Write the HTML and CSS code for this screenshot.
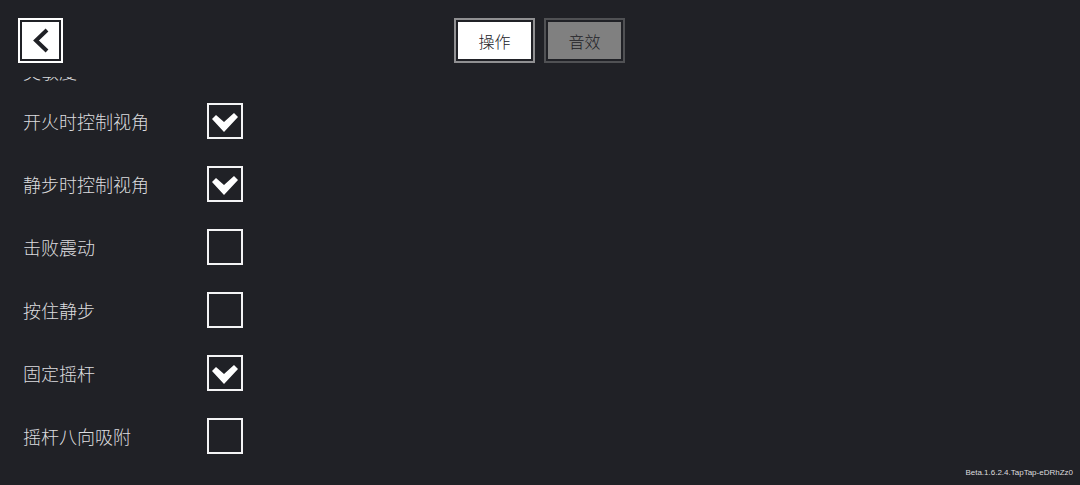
FILE: index.html
```html
<!DOCTYPE html>
<html lang="zh-CN">
<head>
<meta charset="utf-8">
<meta name="viewport" content="width=device-width, initial-scale=1">
<title>操作</title>
<link rel="stylesheet" href="styles.css">
</head>
<body>
<header class="topbar">
  <button class="frame back" type="button" aria-label="返回">
    <svg class="back-icon" viewBox="0 0 37 37" aria-hidden="true"><path d="M25 8 L14 18.500 L25 29"/></svg>
  </button>
  <nav class="tabs">
    <button class="frame tab tab-active" type="button">操作</button>
    <button class="frame tab" type="button">音效</button>
  </nav>
</header>
<main class="settings">
  <div class="row row-text"><span class="label">灵敏度</span></div>
  <div class="row"><label class="label" for="fire">开火时控制视角</label><input class="check" id="fire" type="checkbox" checked></div>
  <div class="row"><label class="label" for="walk">静步时控制视角</label><input class="check" id="walk" type="checkbox" checked></div>
  <div class="row"><label class="label" for="shake">击败震动</label><input class="check" id="shake" type="checkbox"></div>
  <div class="row"><label class="label" for="hold">按住静步</label><input class="check" id="hold" type="checkbox"></div>
  <div class="row"><label class="label" for="stick">固定摇杆</label><input class="check" id="stick" type="checkbox" checked></div>
  <div class="row"><label class="label" for="snap">摇杆八向吸附</label><input class="check" id="snap" type="checkbox"></div>
</main>
<footer class="version">Beta.1.6.2.4.TapTap-eDRhZz0</footer>
</body>
</html>
```
FILE: styles.css
```css
* { box-sizing: border-box; }

body {
  margin: 0;
  height: 100vh;
  display: flex;
  flex-direction: column;
  background: #202126;
  color: #dcdcdf;
  font-family: "Noto Sans CJK SC", sans-serif;
  font-weight: 300;
  overflow: hidden;
}

.topbar {
  display: grid;
  grid-template-columns: 1fr auto 1fr;
  padding: 18px 19px 14px 18px;
}

.frame {
  height: 45px;
  padding: 0;
  border: 2px solid #fff;
  box-shadow: inset 0 0 0 2px #202126;
  font: inherit;
}

.back {
  width: 45px;
  background: #fff;
}

.back-icon {
  display: block;
  width: 37px;
  height: 37px;
  margin: auto;
  fill: none;
  stroke: #202126;
  stroke-width: 4;
}

.tabs {
  display: flex;
  gap: 9px;
}

.tab {
  width: 81px;
  border-color: #505154;
  background: #808080;
  color: #202126;
  font-size: 16px;
}

.tab-active {
  border-color: #909092;
  background: #fff;
}

.settings {
  flex: 1;
  min-height: 0;
  display: flex;
  flex-direction: column;
  justify-content: flex-end;
  gap: 27px;
  padding: 0 23px;
  overflow: hidden;
}

.row {
  flex: none;
  display: grid;
  grid-template-columns: 184px 36px;
  align-items: center;
}

.row-text { margin-bottom: -7px; }

.label {
  font-size: 18px;
  line-height: 24px;
}

.check {
  appearance: none;
  width: 36px;
  height: 36px;
  margin: 0;
  border: 2px solid #f4f4f5;
  display: grid;
  place-items: center;
}

.check:checked::before {
  content: "";
  width: 26px;
  height: 22px;
  background: #fff;
  clip-path: path("M0 9 L4 5 L12 12 L22 3 L26 7 L12 22 Z");
}

.version {
  padding: 13px 7px 6px;
  font: 400 8px/12px "Liberation Sans", sans-serif;
  text-align: right;
}
```
